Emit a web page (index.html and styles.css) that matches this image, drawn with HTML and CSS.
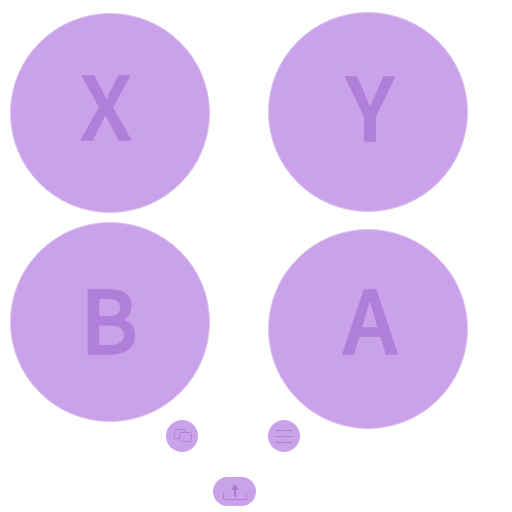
FILE: index.html
```html
<!DOCTYPE html>
<html lang="en">
<head>
<meta charset="utf-8">
<title>Gamepad</title>
<link rel="stylesheet" href="styles.css">
</head>
<body>
<main class="pad">
  <button class="btn face x"><span>X</span></button>
  <button class="btn face y"><span>Y</span></button>
  <button class="btn face b"><span>B</span></button>
  <button class="btn face a"><span>A</span></button>
  <button class="btn small view" aria-label="View">
    <svg class="icon-view" width="18" height="14" viewBox="0 0 18 14" fill="none" stroke="#b07fd9" stroke-width="1">
      <path d="M5 9.500H2.500a2 2 0 0 1-2-2v-5a2 2 0 0 1 2-2h6.500a2 2 0 0 1 2 2V3.500"/>
      <rect x="5.500" y="3.500" width="12" height="9" rx="2"/>
    </svg>
  </button>
  <button class="btn small menu" aria-label="Menu">
    <svg width="16" height="14" viewBox="0 0 16 14" fill="none" stroke="#b07fd9" stroke-width="1">
      <path d="M0 1.500H16M0 7.500H16M0 13.500H16"/>
    </svg>
  </button>
  <button class="btn share" aria-label="Share">
    <svg width="24" height="16" viewBox="0 0 24 16" fill="none">
      <path d="M.5 9V15.500H23.500V9" stroke="#b07fd9"/>
      <path d="M11 5H13V13H11Z" fill="#a87bd0"/>
      <path d="M12 0L16 6H8Z" fill="#a87bd0"/>
    </svg>
  </button>
</main>
</body>
</html>
```
FILE: styles.css
```css
html, body {
  margin: 0;
  background: #fff;
}
.pad {
  position: relative;
  width: 512px;
  height: 512px;
  overflow: hidden;
}
.btn {
  position: absolute;
  display: flex;
  align-items: center;
  justify-content: center;
  margin: 0;
  padding: 0;
  box-sizing: border-box;
  border: 0;
  background: #caa2ea;
  color: #b07fd9;
}
.face {
  width: 200px;
  height: 200px;
  border-radius: 50%;
  border: 1px solid #dcc2f1;
  font-family: "Noto Sans CJK SC", sans-serif;
  font-size: 87px;
  font-weight: 500;
  -webkit-text-stroke: 1.5px #b07fd9;
  line-height: 1;
}
.x { left: 10px; top: 13px; padding: 0 8px 22px 0; }
.y { left: 268px; top: 12px; padding: 0 0 17px 4px; }
.b { left: 10px; top: 222px; padding: 0 2px 11px 0; }
.a { left: 268px; top: 229px; padding: 0 0 25px 4px; }
.small {
  width: 32px;
  height: 32px;
  top: 420px;
  border-radius: 50%;
}
.view { left: 166px; }
.menu { left: 268px; }
.icon-view { margin-left: 1px; }
.share {
  left: 213px;
  top: 477px;
  width: 43px;
  height: 29px;
  border-radius: 15px;
}
```
